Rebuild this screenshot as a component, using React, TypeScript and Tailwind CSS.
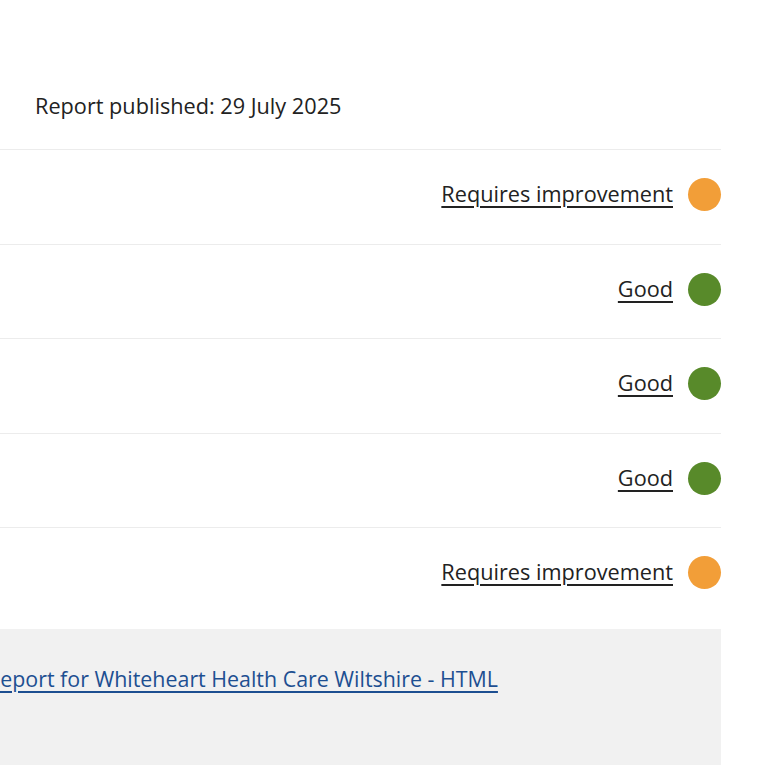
const ratings = [
  { label: 'Requires improvement', color: 'bg-[#f29e38]' },
  { label: 'Good', color: 'bg-[#588a2a]' },
  { label: 'Good', color: 'bg-[#588a2a]' },
  { label: 'Good', color: 'bg-[#588a2a]' },
  { label: 'Requires improvement', color: 'bg-[#f29e38]' },
];

export default function App() {
  return (
    <div className="h-[768px] w-[768px] overflow-hidden bg-white font-['Open_Sans',sans-serif] text-[21.7px] text-[#222]">
      <div className="ml-[-32px] w-[753px]">
        <div className="flex h-[149px] items-end pb-[26px] pl-[67px]">
          <p>Report published: 29 July 2025</p>
        </div>
        {ratings.map((r, i) => (
          <div key={i} className="flex h-[94.5px] items-center justify-end gap-[15px] border-t border-[#ececec] pb-[4px]">
            <a href="#" className="underline underline-offset-[4px]">
              {r.label}
            </a>
            <span className={`h-[33px] w-[33px] rounded-full ${r.color}`} />
          </div>
        ))}
        <div className="mt-[7px] h-[136px] bg-[#f1f1f1] pl-[19px] pt-[34px]">
          <a href="#" className="text-[21.4px] text-[#1d4f91] underline underline-offset-[4px]">
            Report for Whiteheart Health Care Wiltshire - HTML
          </a>
        </div>
      </div>
    </div>
  );
}
